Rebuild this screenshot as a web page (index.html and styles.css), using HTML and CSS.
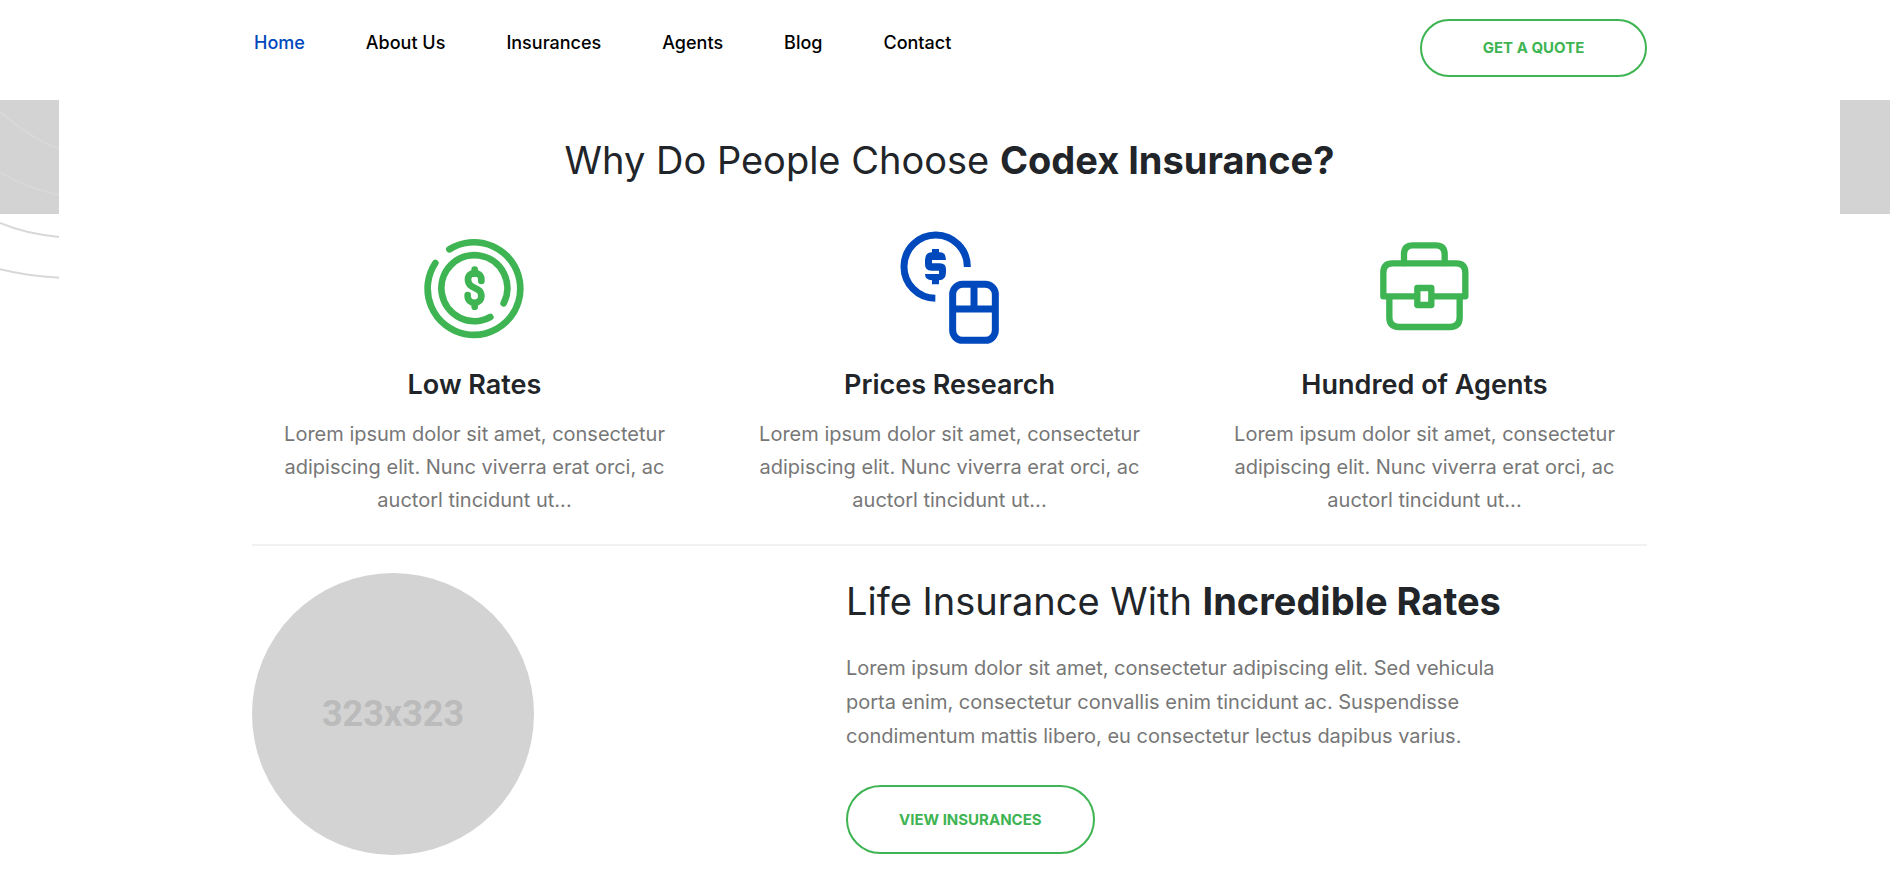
FILE: index.html
```html
<!DOCTYPE html>
<html lang="en">
<head>
<meta charset="utf-8">
<meta name="viewport" content="width=device-width, initial-scale=1">
<title>Codex Insurance</title>
<link rel="stylesheet" href="styles.css">
</head>
<body>
<div class="page">
  <header class="header">
    <div class="container header-row">
      <nav class="nav" aria-label="Main">
        <a class="active" href="#">Home</a>
        <a href="#">About Us</a>
        <a href="#">Insurances</a>
        <a href="#">Agents</a>
        <a href="#">Blog</a>
        <a href="#">Contact</a>
      </nav>
      <a class="btn btn-small" href="#">GET A QUOTE</a>
    </div>
  </header>
  <main class="main">
    <div class="band"></div>
    <svg class="arcs" width="60" height="220" viewBox="0 0 180 660" fill="none" stroke="#d8d8d8" stroke-width="6" aria-hidden="true">
      <path d="M0 34Q78 108 178 148M0 216Q80 264 178 285M0 369Q78 402 178 411M0 508Q84 529 178 533"/>
    </svg>
    <section class="sheet">
      <div class="container">
        <h2 class="title title-center">Why Do People Choose <strong>Codex Insurance?</strong></h2>
        <div class="features">
          <article class="feature">
            <svg class="icon green" viewBox="0 0 390 390" aria-hidden="true">
              <g fill="none" stroke="currentColor" stroke-width="20" stroke-linecap="round">
                <path d="M118 73A139 139 0 1 1 76 114"/>
                <path d="M241 276A99 99 0 1 1 281 235"/>
                <path d="M214 168V163C214 138 174 138 174 163C174 195 214 183 214 213C214 240 173 240 173 213V210M194 134V146M194 234V245"/>
              </g>
            </svg>
            <h3>Low Rates</h3>
            <p>Lorem ipsum dolor sit amet, consectetur adipiscing elit. Nunc viverra erat orci, ac auctorl tincidunt ut...</p>
          </article>
          <article class="feature">
            <svg class="icon blue" viewBox="-15 15 390 390" aria-hidden="true">
              <g fill="none" stroke="currentColor" stroke-width="21">
                <path d="M232 141A95 95 0 1 0 136 235"/>
                <rect x="188" y="193" width="128" height="168" rx="30"/>
                <path d="M188 267H316M252 193V267"/>
              </g>
              <path fill="currentColor" d="M126 87H147V97H150Q168 97 168 120H126V130H150Q168 130 168 148V157Q168 180 147 181V193H126V181Q105 180 105 162H147V152H124Q105 152 105 133V119Q105 98 126 97Z"/>
            </svg>
            <h3>Prices Research</h3>
            <p>Lorem ipsum dolor sit amet, consectetur adipiscing elit. Nunc viverra erat orci, ac auctorl tincidunt ut...</p>
          </article>
          <article class="feature">
            <svg class="icon green" viewBox="-15 0 390 390" aria-hidden="true">
              <g fill="none" stroke="currentColor" stroke-width="19" stroke-linecap="round" stroke-linejoin="round">
                <path d="M117 114V88Q117 61 144 61H212Q239 61 239 88V114"/>
                <path d="M152 214H55V143Q55 115 82 115H274Q301 115 301 143V214H205"/>
                <path d="M73 216V277Q73 306 102 306H255Q284 306 284 277V216"/>
                <rect x="157" y="189" width="42" height="51"/>
              </g>
            </svg>
            <h3>Hundred of Agents</h3>
            <p>Lorem ipsum dolor sit amet, consectetur adipiscing elit. Nunc viverra erat orci, ac auctorl tincidunt ut...</p>
          </article>
        </div>
        <div class="life">
          <div class="photo">323x323</div>
          <div class="life-text">
            <h2 class="title">Life Insurance With <strong>Incredible Rates</strong></h2>
            <p>Lorem ipsum dolor sit amet, consectetur adipiscing elit. Sed vehicula porta enim, consectetur convallis enim tincidunt ac. Suspendisse condimentum mattis libero, eu consectetur lectus dapibus varius.</p>
            <a class="btn" href="#">VIEW INSURANCES</a>
          </div>
        </div>
      </div>
    </section>
  </main>
</div>
</body>
</html>
```
FILE: styles.css
```css
* { box-sizing: border-box; }
body {
  margin: 0;
  background: #fff;
  color: #212529;
  font-family: Inter, "Open Sans", sans-serif;
}
h2, h3, p { margin: 0; }
a { text-decoration: none; }
.container {
  max-width: 1395px;
  margin: 0 auto;
}
.header { padding-left: 9px; }
.header-row {
  display: flex;
  justify-content: space-between;
  align-items: flex-start;
  height: 100px;
  padding-top: 19px;
}
.nav {
  display: flex;
  gap: 61px;
  padding: 12px 0 0 2px;
}
.nav a {
  color: #000;
  font-size: 18px;
  font-weight: 500;
  line-height: 24px;
}
.nav .active { color: #0049bd; }
.btn {
  display: inline-block;
  border: 2px solid #3eb453;
  border-radius: 35px;
  padding: 0 51px;
  color: #3eb453;
  font-size: 15px;
  font-weight: 700;
  line-height: 65px;
  text-align: center;
}
.btn-small {
  width: 227px;
  padding: 0;
  line-height: 54px;
}
.main { position: relative; }
.band {
  position: absolute;
  inset: 0 0 auto;
  height: 114px;
  background: #d3d3d3;
}
.sheet {
  position: relative;
  margin: 0 50px 0 59px;
  padding-top: 32px;
  background: #fff;
}
.arcs {
  position: absolute;
  top: 0;
  left: 0;
}
.title {
  font-size: 38px;
  font-weight: 400;
  line-height: 56px;
}
.title strong { font-weight: 700; }
.title-center { text-align: center; }
.features {
  display: grid;
  grid-template-columns: repeat(3, 1fr);
  gap: 80px;
  padding: 37px 25px 27px;
  border-bottom: 2px solid #f1f1f1;
  margin-bottom: 27px;
}
.feature { text-align: center; }
.icon {
  display: block;
  width: 130px;
  height: 130px;
  margin: 0 auto 12px;
}
.green { color: #3eb453; }
.blue { color: #0049bd; }
.feature h3 {
  font-size: 27px;
  font-weight: 600;
  line-height: 36px;
}
.feature p {
  margin-top: 15px;
  color: #777;
  font-size: 20px;
  line-height: 33px;
}
.life {
  display: grid;
  grid-template-columns: 594px 1fr;
}
.photo {
  display: grid;
  place-items: center;
  width: 282px;
  height: 282px;
  border-radius: 50%;
  background: #d3d3d3;
  color: #bbb;
  font: 700 36px Roboto, sans-serif;
}
.life-text p {
  max-width: 680px;
  margin: 22px 0 32px;
  color: #777;
  font-size: 20px;
  line-height: 34px;
}
```
